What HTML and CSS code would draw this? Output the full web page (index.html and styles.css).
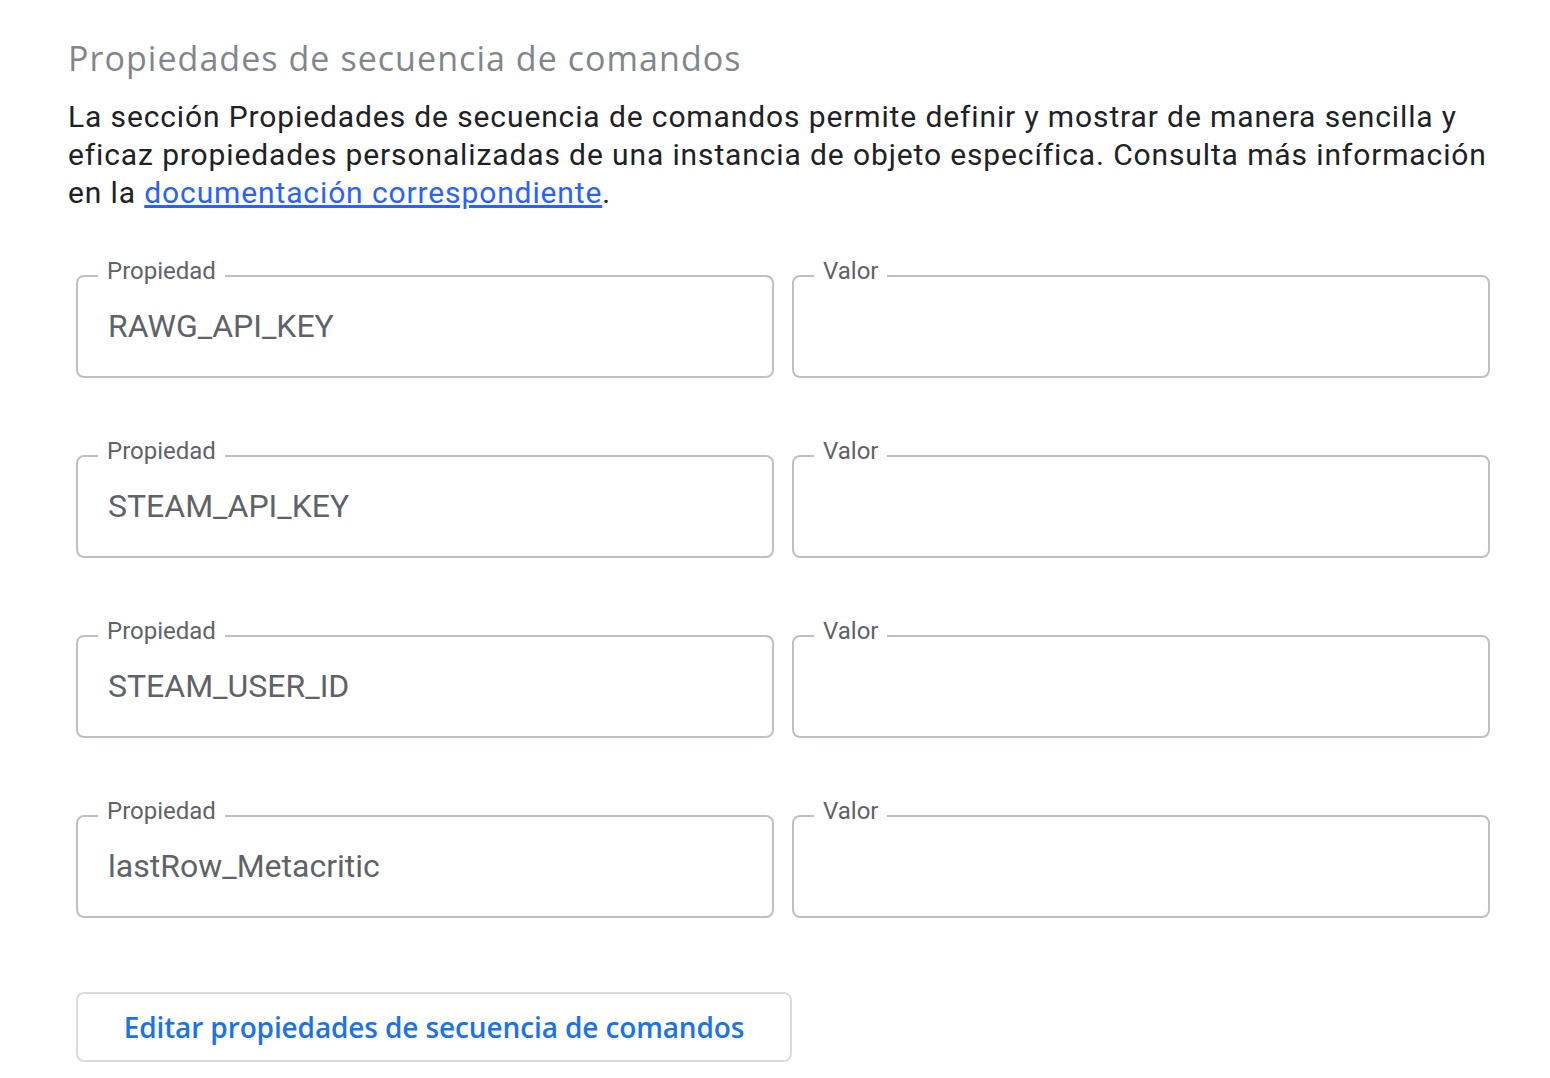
FILE: index.html
```html
<!DOCTYPE html>
<html lang="es">
<head>
<meta charset="utf-8">
<title>Propiedades de secuencia de comandos</title>
<link rel="stylesheet" href="styles.css">
</head>
<body>
<main class="section">
  <h2 class="title">Propiedades de secuencia de comandos</h2>
  <p class="desc">La sección Propiedades de secuencia de comandos permite definir y mostrar de manera sencilla y eficaz propiedades personalizadas de una instancia de objeto específica. Consulta más información en la <a href="#" class="link">documentación correspondiente</a>.</p>
  <div class="props">
    <fieldset class="field"><legend class="label">Propiedad</legend><div class="value">RAWG_API_KEY</div></fieldset>
    <fieldset class="field"><legend class="label">Valor</legend><div class="value"></div></fieldset>
    <fieldset class="field"><legend class="label">Propiedad</legend><div class="value">STEAM_API_KEY</div></fieldset>
    <fieldset class="field"><legend class="label">Valor</legend><div class="value"></div></fieldset>
    <fieldset class="field"><legend class="label">Propiedad</legend><div class="value">STEAM_USER_ID</div></fieldset>
    <fieldset class="field"><legend class="label">Valor</legend><div class="value"></div></fieldset>
    <fieldset class="field"><legend class="label">Propiedad</legend><div class="value">lastRow_Metacritic</div></fieldset>
    <fieldset class="field"><legend class="label">Valor</legend><div class="value"></div></fieldset>
  </div>
  <div class="actions">
    <button class="edit-btn" type="button">Editar propiedades de secuencia de comandos</button>
  </div>
</main>
</body>
</html>
```

FILE: styles.css
```css
html, body {
  margin: 0;
  padding: 0;
  background: #ffffff;
}
body {
  font-family: Roboto, "Liberation Sans", Arial, sans-serif;
}
.section {
  width: 1430px;
  padding: 34px 0 0 68px;
}
.title {
  margin: 0;
  font-family: "Open Sans", Roboto, sans-serif;
  font-weight: 500;
  font-size: 34px;
  line-height: 48px;
  color: #80868b;
  letter-spacing: 1.05px;
}
.desc {
  margin: 16px 0 0 0;
  font-size: 30px;
  line-height: 38px;
  color: #202124;
  letter-spacing: 0.88px;
}
.link {
  color: #2962ff;
  text-decoration: underline;
}
.props {
  display: grid;
  grid-template-columns: 1fr 1fr;
  column-gap: 18px;
  row-gap: 57px;
  padding: 0 8px;
  margin-top: 43px;
}
.field {
  margin: 0;
  padding: 0 20px;
  border: 2px solid #bdc1c6;
  border-radius: 8px;
  min-width: 0;
}
.label {
  padding: 0 9px 10px 9px;
  font-size: 24px;
  line-height: 32px;
  color: #5f6368;
}
.value {
  height: 79px;
  padding: 11px 0 0 10px;
  font-size: 32px;
  line-height: 36px;
  color: #5f6368;
  box-sizing: border-box;
}
.actions {
  padding: 0 8px;
  margin-top: 74px;
}
.edit-btn {
  width: 716px;
  height: 70px;
  background: #fff;
  border: 2px solid #dadce0;
  border-radius: 8px;
  font-family: "Open Sans", Roboto, sans-serif;
  font-weight: 600;
  font-size: 28px;
  letter-spacing: -0.12px;
  color: #1a73e8;
  cursor: pointer;
}
```
